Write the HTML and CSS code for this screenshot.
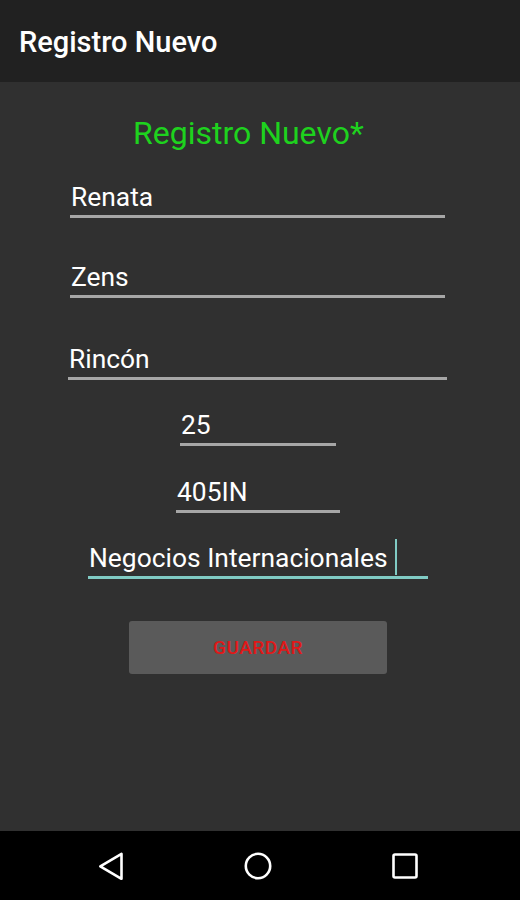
FILE: index.html
```html
<!DOCTYPE html>
<html lang="es">
<head>
<meta charset="utf-8">
<title>Registro Nuevo</title>
<link rel="stylesheet" href="styles.css">
</head>
<body>
<div class="screen">
  <header class="appbar">
    <h1 class="appbar-title">Registro Nuevo</h1>
  </header>
  <main class="content">
    <h2 class="heading">Registro Nuevo*</h2>
    <div class="field f1"><span class="value">Renata</span></div>
    <div class="field f2"><span class="value">Zens</span></div>
    <div class="field f3"><span class="value">Rincón</span></div>
    <div class="field f4"><span class="value">25</span></div>
    <div class="field f5"><span class="value">405IN</span></div>
    <div class="field f6 focused"><span class="value">Negocios Internacionales</span><span class="cursor"></span></div>
    <button class="save">GUARDAR</button>
  </main>
  <nav class="navbar">
    <svg class="nav-icon" width="30" height="30" viewBox="0 0 30 30"><path d="M25.5 2.8 L25.5 27.8 L4.3 15.3 Z" fill="none" stroke="#fff" stroke-width="2.6" stroke-linejoin="round"/></svg>
    <svg class="nav-icon" width="30" height="30" viewBox="0 0 30 30"><circle cx="15" cy="15" r="12.2" fill="none" stroke="#fff" stroke-width="2.6"/></svg>
    <svg class="nav-icon" width="30" height="30" viewBox="0 0 30 30"><rect x="3.5" y="3.5" width="23" height="23" rx="1.5" fill="none" stroke="#fff" stroke-width="2.6"/></svg>
  </nav>
</div>
</body>
</html>
```
FILE: styles.css
```css
html, body {
  margin: 0;
  padding: 0;
  background: #303030;
}
.screen {
  width: 520px;
  height: 900px;
  display: flex;
  flex-direction: column;
  font-family: Roboto, "Liberation Sans", sans-serif;
}
.appbar {
  height: 82px;
  background: #212121;
  display: flex;
  align-items: center;
  padding-left: 19px;
  box-sizing: border-box;
}
.appbar-title {
  margin: 0;
  color: #fff;
  font-size: 29px;
  font-weight: 500;
  line-height: 34px;
  padding-top: 2px;
}
.content {
  flex: 1;
  background: #303030;
  display: flex;
  flex-direction: column;
  align-items: flex-start;
}
.heading {
  margin: 33px 0 0 133px;
  color: #1ed21e;
  font-size: 32px;
  font-weight: 400;
  line-height: 36px;
}
.field {
  box-sizing: border-box;
  height: 37px;
  border-bottom: 3px solid #a6a6a6;
  padding-bottom: 2px;
  display: flex;
  align-items: flex-start;
}
.value {
  color: #fff;
  font-size: 26.4px;
  line-height: 32px;
  padding-left: 1px;
}
.f1 { margin: 30px 0 0 70px; width: 375px; }
.f2 { margin: 43px 0 0 70px; width: 375px; }
.f3 { margin: 45px 0 0 68px; width: 379px; }
.f4 { margin: 29px 0 0 180px; width: 156px; }
.f5 { margin: 30px 0 0 176px; width: 164px; }
.f6 { margin: 29px 0 0 88px; width: 340px; }
.focused { border-bottom-color: #80cbc4; }
.cursor {
  display: block;
  width: 2px;
  height: 36px;
  margin-left: 7px;
  margin-top: -3px;
  background: #80cbc4;
}
.save {
  margin: 42px 0 0 129px;
  width: 258px;
  height: 53px;
  background: #5a5a5a;
  border: none;
  border-radius: 3px;
  color: #e01818;
  font-family: Roboto, "Liberation Sans", sans-serif;
  font-size: 19px;
  font-weight: 500;
  letter-spacing: 0.5px;
  padding: 0;
}
.navbar {
  height: 69px;
  background: #000;
  display: flex;
  align-items: center;
  justify-content: space-between;
  padding: 0 100px 0 96px;
}
.nav-icon {
  display: block;
}
```
